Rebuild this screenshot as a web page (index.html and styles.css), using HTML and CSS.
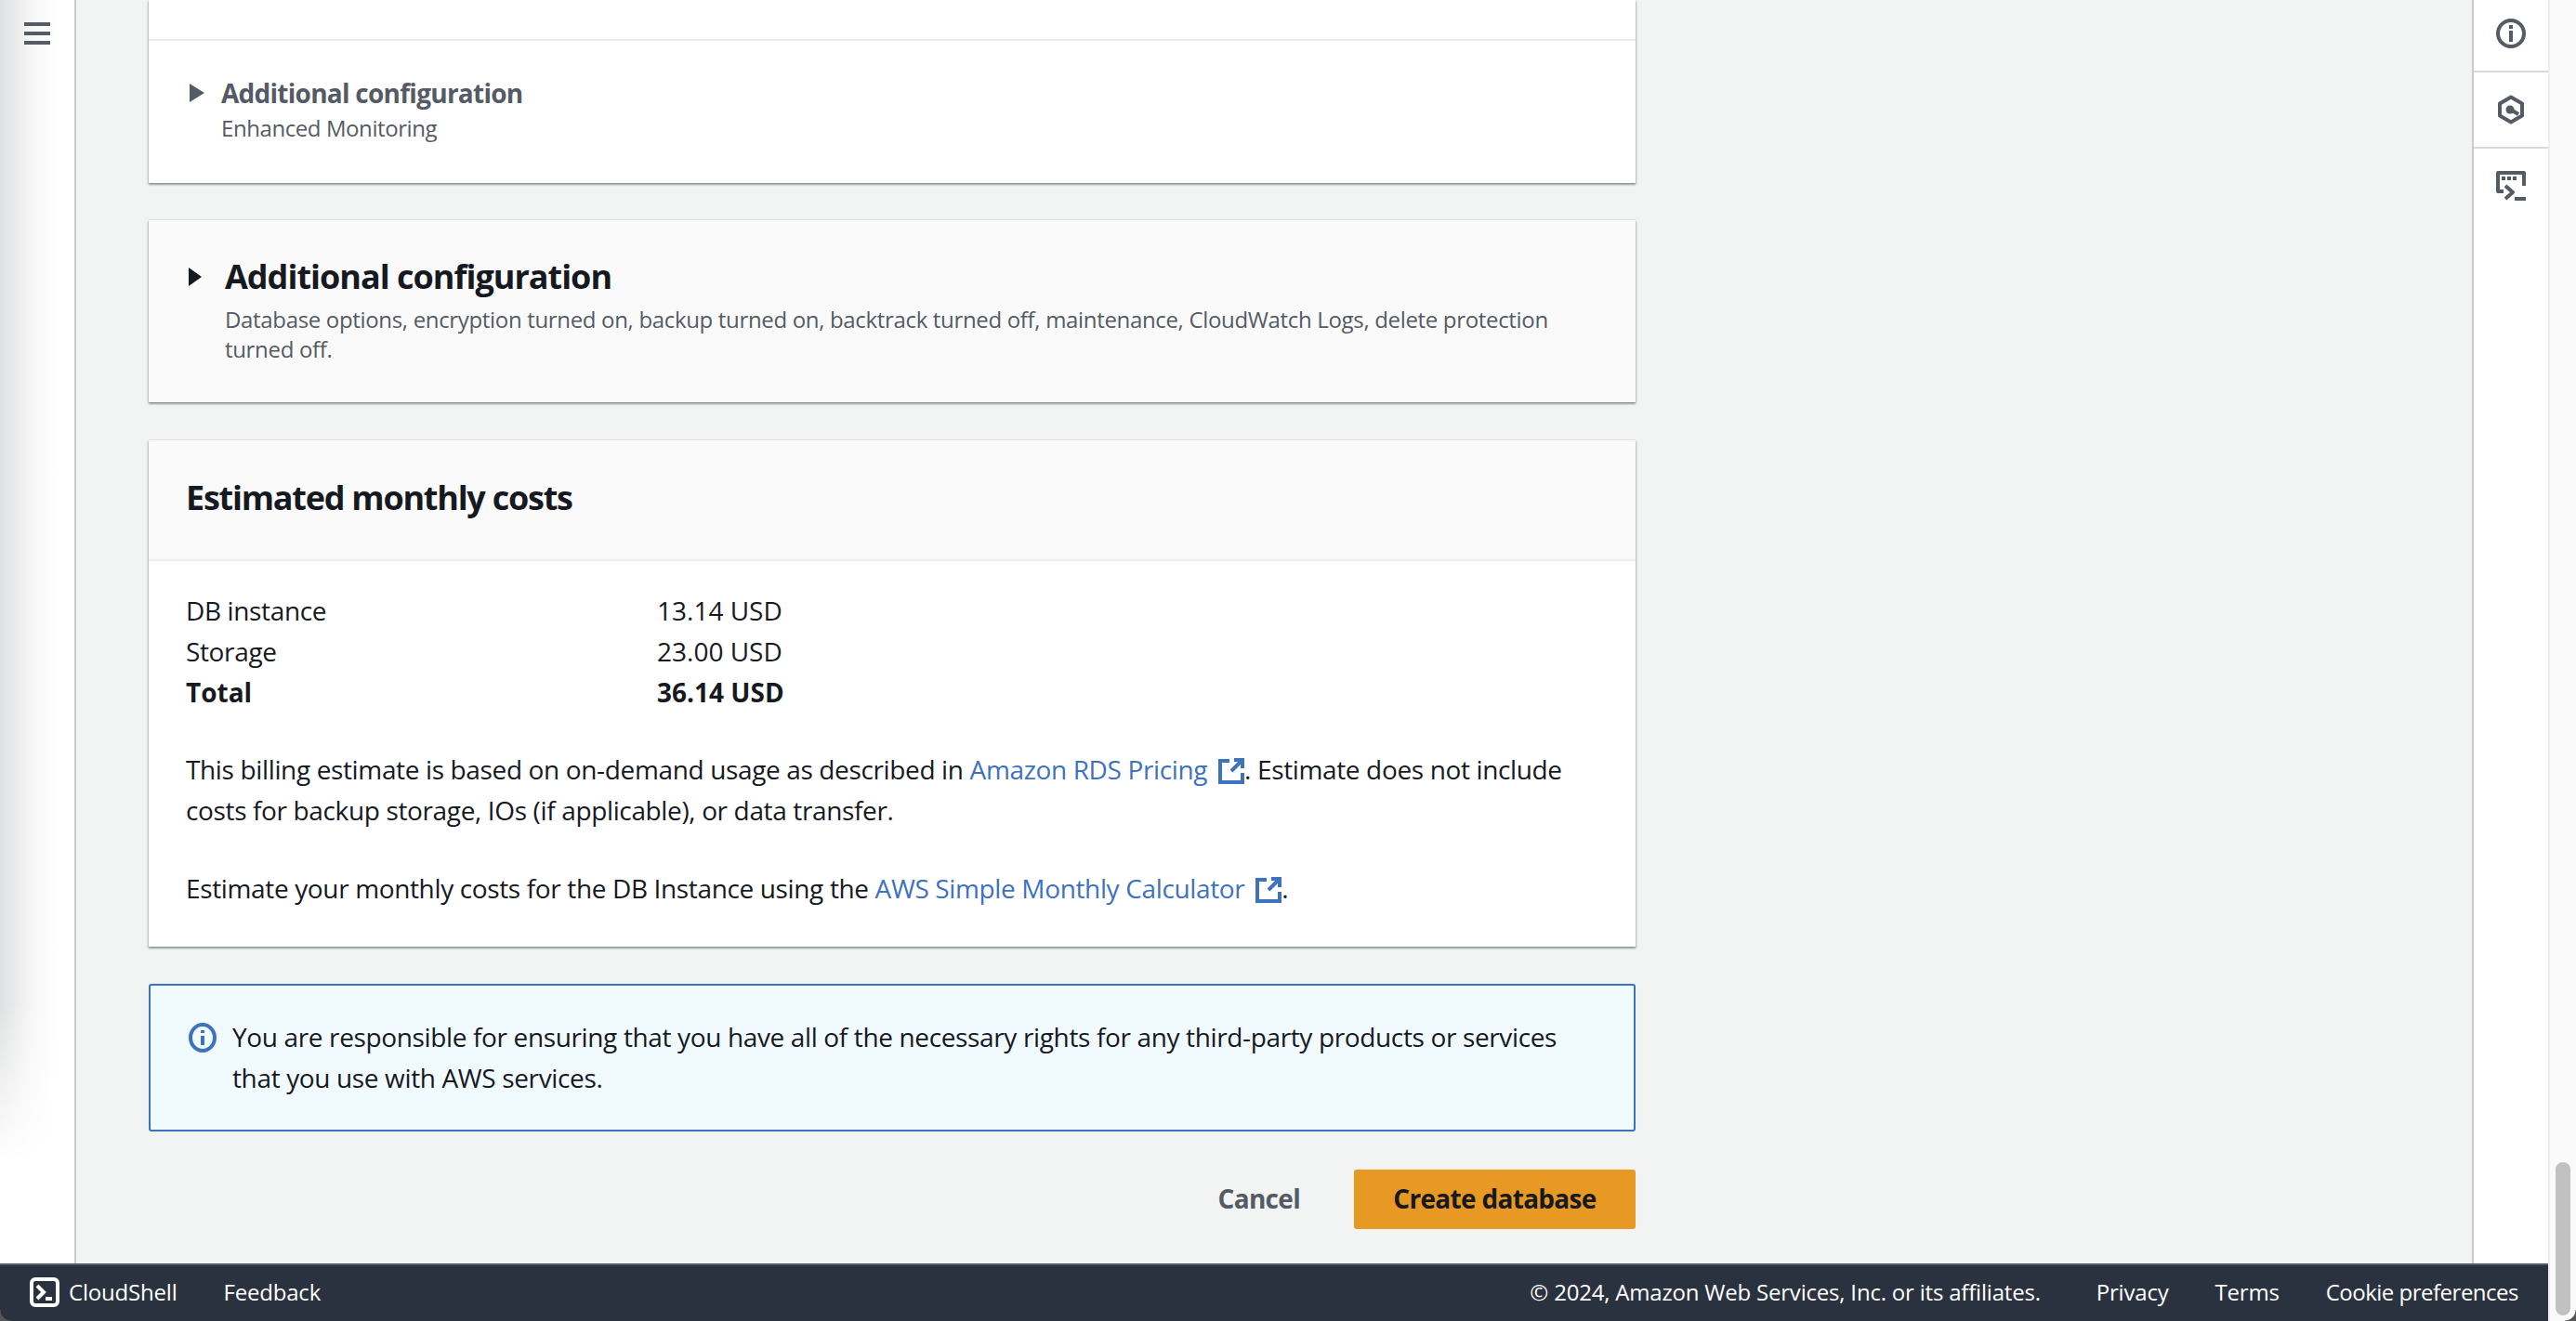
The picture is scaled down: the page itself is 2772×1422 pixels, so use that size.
FILE: index.html
```html
<!DOCTYPE html>
<html lang="en">
<head>
    <meta charset="UTF-8">
    <title>Create database - RDS</title>
    <link rel="stylesheet" href="styles.css">
</head>
<body>
    <div class="console">
        <div class="workspace">
            <nav class="side-nav">
                <div class="nav-shade"></div>
                <button class="menu-button" aria-label="Menu"><span></span><span></span><span></span></button>
            </nav>
            <main class="content">
                <section class="card">
                    <div class="card-top"></div>
                    <div class="expander">
                        <svg class="caret" viewBox="0 0 16 20"><path d="M0 0L16 10L0 20Z"/></svg>
                        <div>
                            <h3 class="expander-title">Additional configuration</h3>
                            <p class="expander-note">Enhanced Monitoring</p>
                        </div>
                    </div>
                </section>

                <section class="card card-grey">
                    <svg class="caret caret-dark" viewBox="0 0 14 20"><path d="M0 0L14 10L0 20Z"/></svg>
                    <div>
                        <h2 class="card-title">Additional configuration</h2>
                        <p class="card-note">Database options, encryption turned on, backup turned on, backtrack turned off, maintenance, CloudWatch Logs, delete protection turned off.</p>
                    </div>
                </section>

                <section class="card">
                    <header class="card-header">
                        <h2 class="card-title">Estimated monthly costs</h2>
                    </header>
                    <div class="card-body">
                        <dl class="costs">
                            <dt>DB instance</dt><dd>13.14 USD</dd>
                            <dt>Storage</dt><dd>23.00 USD</dd>
                            <dt class="total">Total</dt><dd class="total">36.14 USD</dd>
                        </dl>
                        <p>This billing estimate is based on on-demand usage as described in <a href="#">Amazon RDS Pricing <svg class="ext" viewBox="0 0 28 28"><path d="M12 3H2V26H26V16M14 14L25 3M17 2H26V11"/></svg></a>. Estimate does not include costs for backup storage, IOs (if applicable), or data transfer.</p>
                        <p>Estimate your monthly costs for the DB Instance using the <a href="#">AWS Simple Monthly Calculator <svg class="ext" viewBox="0 0 28 28"><path d="M12 3H2V26H26V16M14 14L25 3M17 2H26V11"/></svg></a>.</p>
                    </div>
                </section>

                <div class="alert">
                    <svg class="alert-icon" viewBox="0 0 30 32"><ellipse cx="15" cy="16" rx="13" ry="14"/><path d="M15 14V24M15 8V11"/></svg>
                    <p>You are responsible for ensuring that you have all of the necessary rights for any third-party products or services that you use with AWS services.</p>
                </div>

                <div class="actions">
                    <button class="btn-link">Cancel</button>
                    <button class="btn-primary">Create database</button>
                </div>
            </main>
            <aside class="tools">
                <button class="tool">
                    <svg viewBox="0 0 32 32"><circle cx="16" cy="16" r="14"/><path d="M16 13V25M16 7V11"/></svg>
                </button>
                <button class="tool">
                    <svg viewBox="0 0 32 32"><path d="M16 2.5L28 9.5V22.5L16 29.5L4 22.5V9.5Z"/><path d="M16 16L24 21"/><circle class="dot" cx="15" cy="16" r="4.5"/></svg>
                </button>
                <button class="tool">
                    <svg viewBox="0 0 32 32"><path d="M30 16V2H2V22H8M10 16L18 23L10 30"/><path class="dot" d="M6 6H10V10H6ZM12 6H16V10H12ZM18 6H22V10H18ZM20 28H32V32H20Z"/></svg>
                </button>
            </aside>
        </div>
        <footer class="footer">
            <div class="footer-left">
                <a class="shell" href="#">
                    <svg viewBox="0 0 32 32"><rect x="2" y="2" width="28" height="28" rx="4"/><path d="M8 9L15 16L8 23M17 23H24"/></svg>
                    CloudShell
                </a>
                <a href="#">Feedback</a>
            </div>
            <div class="footer-right">
                <span class="copyright">© 2024, Amazon Web Services, Inc. or its affiliates.</span>
                <a href="#">Privacy</a>
                <a href="#">Terms</a>
                <a class="cookies" href="#">Cookie preferences</a>
            </div>
        </footer>
    </div>
    <div class="scrollbar"><div class="thumb"></div></div>
</body>
</html>
```

FILE: styles.css
```css
* {
    box-sizing: border-box;
}
html, body {
    height: 100%;
}
body {
    margin: 0;
    display: flex;
    overflow: hidden;
    background: #f2f3f3;
    color: #16191f;
    font-family: "Open Sans", sans-serif;
    font-size: 28px;
    line-height: 44px;
    letter-spacing: -.36px;
}
/* rounded window corners at the bottom of the shot */
body::before, body::after {
    content: "";
    position: fixed;
    bottom: 0;
    width: 12px;
    height: 12px;
    z-index: 2;
}
body::before {
    left: 0;
    background: radial-gradient(circle at 100% 0, transparent 11px, #555 12px);
}
body::after {
    right: 0;
    background: radial-gradient(circle at 0 0, transparent 11px, #555 12px);
}
h2, h3, p, dl, dd {
    margin: 0;
}
button {
    font: inherit;
    letter-spacing: inherit;
    border: none;
    background: none;
    padding: 0;
}
a {
    color: #3f72bd;
    text-decoration: none;
}

.console {
    flex: 1;
    min-width: 0;
    display: flex;
    flex-direction: column;
}
.workspace {
    flex: 1;
    min-height: 0;
    display: flex;
}

/* left nav */
.side-nav {
    width: 82px;
    background: #fff;
    border-right: 2px solid #c9cbcd;
    position: relative;
    padding: 24px 0 0 26px;
}
.nav-shade {
    position: absolute;
    left: 0;
    top: 0;
    bottom: 110px;
    width: 60px;
    background: linear-gradient(to right, #dfe0e1, #f6f6f6 55%, #fff);
    -webkit-mask-image: linear-gradient(to bottom, #000 1080px, transparent);
}
.menu-button {
    position: relative;
    display: flex;
    flex-direction: column;
    gap: 6px;
    width: 28px;
}
.menu-button span {
    height: 4px;
    background: #545b64;
}

/* main column */
.content {
    width: 1678px;
    padding: 0 0 0 78px;
    display: flex;
    flex-direction: column;
}
.card {
    background: #fff;
    box-shadow: 0 2px 2px 0 rgba(0, 28, 36, .3), 1px 1px 2px 0 rgba(0, 28, 36, .15), -1px 1px 2px 0 rgba(0, 28, 36, .15), 0 -1px 1px 0 rgba(0, 28, 36, .06);
    margin-bottom: 40px;
}
.card-top {
    height: 44px;
    border-bottom: 2px solid #eaeded;
}
.expander {
    display: flex;
    gap: 18px;
    height: 153px;
    padding: 36px 0 0 44px;
}
.caret {
    width: 16px;
    height: 20px;
    margin-top: 10px;
    fill: #545b64;
    flex: none;
}
.expander-title {
    font-size: 28px;
    line-height: 40px;
    font-weight: 700;
    color: #545b64;
    letter-spacing: -.74px;
}
.expander-note {
    font-size: 24px;
    line-height: 36px;
    color: #545b64;
    letter-spacing: -.42px;
}
.card-grey {
    display: flex;
    gap: 25px;
    height: 196px;
    padding: 40px 40px 0 43px;
    background: #fafafa;
    margin-bottom: 41px;
}
.caret-dark {
    width: 14px;
    margin-top: 11px;
    fill: #16191f;
}
.card-title {
    font-size: 36px;
    line-height: 42px;
    font-weight: 700;
    letter-spacing: -1px;
}
.card-note {
    font-size: 24px;
    line-height: 32px;
    color: #545b64;
    margin-top: 9px;
    letter-spacing: -.33px;
}
.card-header {
    height: 130px;
    padding: 41px 40px 0;
    background: #fafafa;
    border-bottom: 2px solid #eaeded;
}
.card-header .card-title {
    letter-spacing: -1.25px;
}
.card-body {
    height: 415px;
    padding: 31px 40px 0;
}
.card-body p {
    margin-top: 39px;
}
.card-body p:last-child {
    margin-top: 40px;
}
.costs {
    display: grid;
    grid-template-columns: 507px 1fr;
}
.costs dd {
    letter-spacing: 0;
}
.costs .total {
    font-weight: 700;
    letter-spacing: 0;
}
.ext {
    width: 28px;
    height: 28px;
    vertical-align: -5px;
    margin-left: 5px;
    fill: none;
    stroke: #3f72bd;
    stroke-width: 4;
}

/* info alert */
.alert {
    display: flex;
    gap: 17px;
    height: 159px;
    padding: 33px 40px 0 41px;
    background: #f1faff;
    border: 2px solid #3f72bd;
    border-radius: 3px;
}
.alert-icon {
    width: 30px;
    height: 32px;
    flex: none;
    margin-top: 7px;
    fill: none;
    stroke: #3f72bd;
    stroke-width: 4;
}
.actions {
    display: flex;
    justify-content: flex-end;
    align-items: center;
    gap: 58px;
    margin-top: 41px;
    font-weight: 700;
    letter-spacing: -.7px;
}
.btn-link {
    font-weight: 700;
    color: #545b64;
    padding-bottom: 2px;
}
.btn-primary {
    width: 303px;
    height: 64px;
    padding-bottom: 2px;
    font-weight: 700;
    background: #e89923;
    border-radius: 3px;
    color: #16191f;
}

/* right tools rail */
.tools {
    width: 82px;
    margin-left: auto;
    background: #fff;
    border-left: 2px solid #c9cbcd;
}
.tool {
    display: flex;
    justify-content: center;
    width: 100%;
    height: 82px;
    padding-top: 24px;
    border-bottom: 2px solid #d5dbdb;
}
.tool:first-child {
    height: 78px;
    padding-top: 20px;
}
.tool:last-child {
    border-bottom: none;
}
.tool svg {
    width: 32px;
    height: 32px;
    fill: none;
    stroke: #545b64;
    stroke-width: 4;
    stroke-linejoin: round;
}
.tool .dot {
    fill: #545b64;
    stroke: none;
}

/* footer */
.footer {
    height: 62px;
    flex: none;
    display: flex;
    justify-content: space-between;
    align-items: center;
    padding: 0 32px 2px;
    background: #2a3240;
    border-top: 2px solid #545b64;
    font-size: 24px;
    letter-spacing: -.2px;
}
.footer a {
    color: #fff;
}
.footer-left, .footer-right {
    display: flex;
    align-items: center;
}
.footer-left {
    gap: 50px;
}
.footer-right {
    gap: 50px;
    color: #fff;
}
.copyright {
    margin-right: 10px;
}
.footer .cookies {
    letter-spacing: -.5px;
}
.shell {
    display: flex;
    align-items: center;
    gap: 10px;
}
.shell svg {
    width: 32px;
    height: 32px;
    fill: none;
    stroke: #fff;
    stroke-width: 4;
}

/* page scrollbar */
.scrollbar {
    width: 30px;
    flex: none;
    padding: 1251px 6px 0 6px;
    background: #fafafa;
    border-left: 2px solid #eee;
}
.thumb {
    height: 165px;
    border-radius: 8px;
    background: #c1c1c1;
}
```
